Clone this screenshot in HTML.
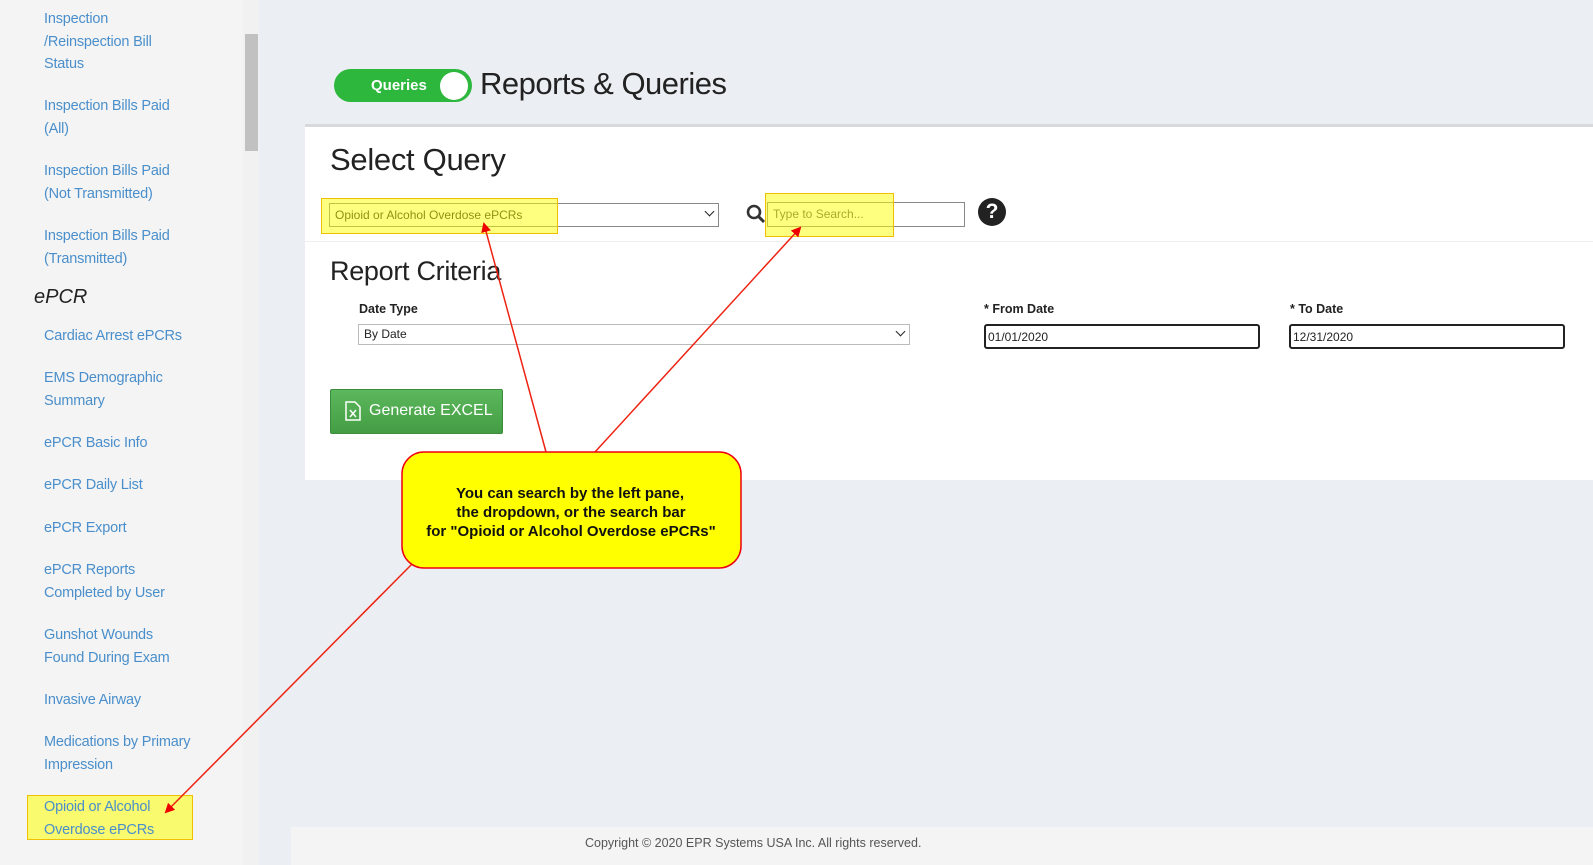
<!DOCTYPE html>
<html><head><meta charset="utf-8"><style>
*{margin:0;padding:0;box-sizing:border-box}
body{width:1593px;height:865px;overflow:hidden;background:#ebeef2;font-family:"Liberation Sans",sans-serif;position:relative}
.a{position:absolute}
#side{left:0;top:0;width:243px;height:865px;background:#f4f4f4}
.lk{position:absolute;left:44px;color:#4a8fcb;font-size:14.5px;line-height:22.5px;letter-spacing:-0.2px}
#track{left:243px;top:0;width:16px;height:865px;background:#f1f1f1}
#thumb{left:245px;top:34px;width:13px;height:117px;background:#c1c1c1}
#card{left:305px;top:124px;width:1288px;height:356px;background:#fff;border-top:3px solid #d7d9dd}
.sel{background:#fff;border:1px solid #888;font-size:12px;color:#222;padding-left:5px;line-height:22px}
.lbl{font-size:12.5px;font-weight:bold;color:#222}
.hl{background:rgba(255,255,0,.55);border:1px solid #f0c000}
.chev{position:absolute;right:5px;top:4px;width:7px;height:7px;border-right:1.6px solid #222;border-bottom:1.6px solid #222;transform:rotate(45deg)}
</style></head><body>
<div id="side" class="a">
<div class="lk" style="top:8px">Inspection<br>/Reinspection Bill<br>Status</div>
<div class="lk" style="top:95px">Inspection Bills Paid<br>(All)</div>
<div class="lk" style="top:160px">Inspection Bills Paid<br>(Not Transmitted)</div>
<div class="lk" style="top:225px">Inspection Bills Paid<br>(Transmitted)</div>
<div class="a" style="left:34px;top:286px;font-size:20px;font-style:italic;color:#222">ePCR</div>
<div class="lk" style="top:325px">Cardiac Arrest ePCRs</div>
<div class="lk" style="top:367px">EMS Demographic<br>Summary</div>
<div class="lk" style="top:432px">ePCR Basic Info</div>
<div class="lk" style="top:474px">ePCR Daily List</div>
<div class="lk" style="top:517px">ePCR Export</div>
<div class="lk" style="top:559px">ePCR Reports<br>Completed by User</div>
<div class="lk" style="top:624px">Gunshot Wounds<br>Found During Exam</div>
<div class="lk" style="top:689px">Invasive Airway</div>
<div class="lk" style="top:731px">Medications by Primary<br>Impression</div>
<div class="a hl" style="left:27px;top:795px;width:166px;height:45px"></div>
<div class="lk" style="top:796px">Opioid or Alcohol<br>Overdose ePCRs</div>
</div>
<div id="track" class="a"></div><div id="thumb" class="a"></div>

<div class="a" style="left:334px;top:69px;width:138px;height:33px;border-radius:17px;background:#2db83d"></div>
<div class="a" style="left:371px;top:77px;color:#fff;font-weight:bold;font-size:15px">Queries</div>
<div class="a" style="left:440px;top:72px;width:28px;height:28px;border-radius:50%;background:#fff"></div>
<div class="a" style="left:480px;top:66px;font-size:31px;color:#222;letter-spacing:-0.5px">Reports &amp; Queries</div>

<div id="card" class="a"></div>
<div class="a" style="left:330px;top:142px;font-size:31px;color:#222;letter-spacing:-0.3px">Select Query</div>
<div class="a" style="left:305px;top:241px;width:1288px;height:1px;background:#eee"></div>
<div class="a sel" style="left:329px;top:203px;width:390px;height:24px">Opioid or Alcohol Overdose ePCRs<div class="chev"></div></div>
<div class="a hl" style="left:321px;top:198px;width:237px;height:36px;background:rgba(255,255,0,.5)"></div>
<svg class="a" style="left:746px;top:204px" width="20" height="20" viewBox="0 0 20 20"><circle cx="8" cy="8" r="6" fill="none" stroke="#333" stroke-width="2.6"/><path d="M12.5 12.5L18 18" stroke="#333" stroke-width="3"/></svg>
<div class="a sel" style="left:767px;top:202px;width:198px;height:25px;color:#555">Type to Search...</div>
<div class="a hl" style="left:765px;top:193px;width:129px;height:44px;background:rgba(255,255,0,.5)"></div>
<div class="a" style="left:978px;top:198px;width:28px;height:28px;border-radius:50%;background:#222;color:#fff;font-weight:bold;font-size:21px;text-align:center;line-height:28px">?</div>

<div class="a" style="left:330px;top:256px;font-size:27px;color:#222;letter-spacing:-0.3px">Report Criteria</div>
<div class="a lbl" style="left:359px;top:302px">Date Type</div>
<div class="a sel" style="left:358px;top:324px;width:552px;height:21px;border-color:#bbb;line-height:19px">By Date<div class="chev" style="top:3px"></div></div>
<div class="a lbl" style="left:984px;top:302px">* From Date</div>
<div class="a sel" style="left:984px;top:324px;width:276px;height:25px;border:2px solid #222;border-radius:3px;padding-left:2px">01/01/2020</div>
<div class="a lbl" style="left:1290px;top:302px">* To Date</div>
<div class="a sel" style="left:1289px;top:324px;width:276px;height:25px;border:2px solid #222;border-radius:3px;padding-left:2px">12/31/2020</div>

<div class="a" style="left:330px;top:389px;width:173px;height:45px;background:linear-gradient(#5cb85c,#449d44);border:1px solid #3d8b3d;border-radius:2px"></div>
<svg class="a" style="left:345px;top:401px" width="16" height="20" viewBox="0 0 16 20"><path d="M1 1H10L15 6V19H1Z" fill="none" stroke="#fff" stroke-width="1.5"/><path d="M5 9L11 16M11 9L5 16" stroke="#fff" stroke-width="1.5"/></svg>
<div class="a" style="left:369px;top:402px;color:#fff;font-size:16px">Generate EXCEL</div>

<div class="a" style="left:291px;top:827px;width:1302px;height:38px;background:#f4f4f4"></div>
<div class="a" style="left:585px;top:836px;font-size:12.5px;color:#555">Copyright © 2020 EPR Systems USA Inc. All rights reserved.</div>

<svg class="a" style="left:0;top:0" width="1593" height="865">
<defs><marker id="m" markerWidth="10" markerHeight="10" refX="8" refY="5" orient="auto" markerUnits="userSpaceOnUse"><path d="M0 0L10 5L0 10Z" fill="#e00"/></marker></defs>
<g stroke="#e21" stroke-width="1.5" fill="none">
<line x1="546" y1="452" x2="484" y2="224" marker-end="url(#m)"/>
<line x1="595" y1="452" x2="800" y2="228" marker-end="url(#m)"/>
<line x1="413" y1="563" x2="166" y2="812" marker-end="url(#m)"/>
</g>
<rect x="402" y="452" width="339" height="116" rx="22" fill="#ffff00" stroke="#e01" stroke-width="1.5"/>
<g font-family="Liberation Sans,sans-serif" font-weight="bold" font-size="15" text-anchor="middle" fill="#111">
<text x="570" y="498">You can search by the left pane,</text>
<text x="571" y="517">the dropdown, or the search bar</text>
<text x="571" y="536">for "Opioid or Alcohol Overdose ePCRs"</text>
</g>
</svg>
</body></html>
